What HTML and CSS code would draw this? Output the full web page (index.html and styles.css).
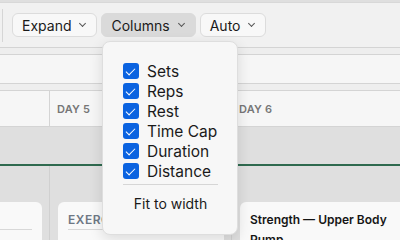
FILE: index.html
```html
<!DOCTYPE html>
<html lang="en">
<head>
  <meta charset="UTF-8">
  <meta name="viewport" content="width=device-width, initial-scale=1.0">
  <title>Program board</title>
  <link rel="stylesheet" href="styles.css">
</head>
<body>
  <div class="page">
    <div class="toolbar">
      <span class="sep"></span>
      <button class="tb-btn">Expand <span class="chev"></span></button>
      <button class="tb-btn active">Columns <span class="chev"></span></button>
      <button class="tb-btn">Auto <span class="chev"></span></button>
    </div>
    <div class="strip"></div>
    <div class="week-row"></div>
    <div class="strip"></div>
    <div class="day-head">
      <div class="day"></div>
      <div class="day">DAY 5</div>
      <div class="day">DAY 6</div>
    </div>
    <div class="board">
      <div class="band"></div>
      <div class="cols">
        <div class="col">
          <div class="card stub">
            <div class="card-head"></div>
          </div>
        </div>
        <div class="col">
          <div class="card">
            <div class="card-head">EXERCISE</div>
          </div>
        </div>
        <div class="col">
          <div class="card">
            <div class="card-title">Strength — Upper Body Pump</div>
          </div>
        </div>
      </div>
    </div>

    <div class="menu">
      <label class="opt"><span class="box"></span>Sets</label>
      <label class="opt"><span class="box"></span>Reps</label>
      <label class="opt"><span class="box"></span>Rest</label>
      <label class="opt"><span class="box"></span>Time Cap</label>
      <label class="opt"><span class="box"></span>Duration</label>
      <label class="opt"><span class="box"></span>Distance</label>
      <div class="menu-sep"></div>
      <div class="menu-action">Fit to width</div>
    </div>
  </div>
</body>
</html>
```

FILE: styles.css
```css
body {
  margin: 0;
  padding: 0;
  font-family: Inter, "Noto Sans", sans-serif;
  background: #dfdfdf;
  color: #1a1a1a;
}

.page {
  position: relative;
  width: 400px;
  height: 240px;
  overflow: hidden;
}

.toolbar {
  height: 44px;
  margin-top: 2px;
  border-top: 1px solid #d8d8d8;
  border-bottom: 1px solid #d4d4d4;
  background: #f1f1f1;
  display: flex;
  align-items: center;
  gap: 4px;
  padding-left: 2px;
}

.sep {
  width: 1px;
  height: 33px;
  background: #d6d6d6;
  margin-right: 5px;
}

.tb-btn {
  height: 24px;
  padding: 0 11px 0 9px;
  border: 1px solid #dcdcdc;
  border-radius: 6px;
  background: #f8f8f8;
  font-family: Inter, sans-serif;
  font-size: 14px;
  color: #1a1a1a;
  display: flex;
  align-items: center;
  gap: 9px;
  white-space: nowrap;
}

.tb-btn.active {
  background: #dadada;
  border-color: #dadada;
}

.chev {
  width: 4px;
  height: 4px;
  border-right: 1.2px solid #555;
  border-bottom: 1.2px solid #555;
  transform: rotate(45deg);
  margin-top: -3px;
}

.strip {
  height: 6px;
  background: #eeeeee;
  border-bottom: 1px solid #d4d4d4;
}

.week-row {
  height: 28px;
  background: #f6f6f6;
  border-bottom: 1px solid #d4d4d4;
}

.day-head {
  display: grid;
  grid-template-columns: 50px 182px 182px;
  height: 35px;
  background: #f6f6f6;
  border-bottom: 1px solid #d4d4d4;
}

.day {
  border-right: 1px solid #d4d4d4;
  padding: 11px 0 0 7px;
  font-size: 11px;
  font-weight: 600;
  color: #777;
  letter-spacing: 0.2px;
}

.band {
  height: 37px;
  border-bottom: 2px solid #2f6a4f;
}

.cols {
  display: grid;
  grid-template-columns: 50px 182px 182px;
  height: 80px;
}

.col {
  border-right: 1px solid #d0d0d0;
  padding: 36px 7px 0 8px;
}

.col:first-child {
  padding-left: 0;
}

.card {
  background: #f9f9f9;
  border-radius: 6px;
  height: 60px;
  padding: 10px 10px 0;
}

.card.stub {
  border-radius: 0 6px 0 0;
  padding-left: 0;
}

.card-head {
  font-size: 12px;
  font-weight: 600;
  color: #6e7884;
  letter-spacing: 0.5px;
  height: 17px;
  border-bottom: 1px solid #d8d8d8;
}

.card-title {
  font-size: 12px;
  font-weight: 600;
  color: #151515;
  line-height: 20px;
  margin-top: -2px;
}

.menu {
  position: absolute;
  left: 102px;
  top: 41px;
  width: 136px;
  height: 194px;
  box-sizing: border-box;
  padding: 19px 10px 0 20px;
  background: #f7f7f7;
  border: 1px solid #dedede;
  border-radius: 8px;
  box-shadow: 0 4px 14px rgba(0, 0, 0, 0.12);
}

.opt {
  display: flex;
  align-items: center;
  gap: 8px;
  height: 20px;
  font-size: 15.5px;
  color: #1a1a1a;
  white-space: nowrap;
}

.box {
  width: 16px;
  height: 16px;
  border-radius: 3px;
  background: #0b63e0;
  position: relative;
  flex: none;
}

.box::after {
  content: "";
  position: absolute;
  left: 5px;
  top: 2.5px;
  width: 4px;
  height: 8px;
  border-right: 1.6px solid #fff;
  border-bottom: 1.6px solid #fff;
  transform: rotate(45deg);
}

.menu-sep {
  height: 1px;
  background: #d6d6d6;
  margin: 3px 9px 0 0;
}

.menu-action {
  text-align: center;
  font-size: 14px;
  padding: 10px 9px 0 0;
  color: #1a1a1a;
}
```
